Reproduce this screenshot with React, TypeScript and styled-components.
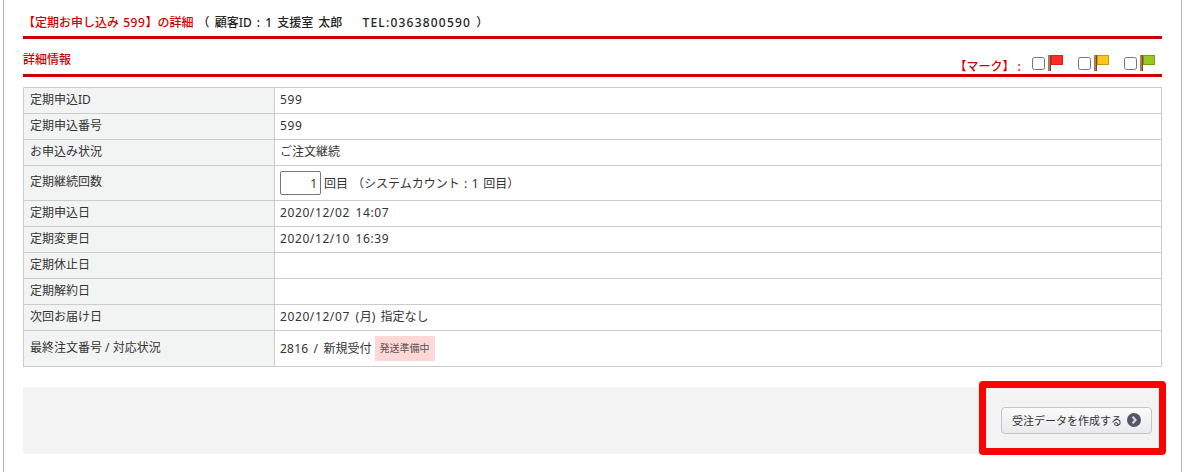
import styled, { createGlobalStyle } from "styled-components";

const GlobalStyle = createGlobalStyle`
  html, body {
    margin: 0;
    padding: 0;
    height: 472px;
    overflow: hidden;
    background: #fff;
    font-family: "Noto Sans", "Noto Sans CJK JP", sans-serif;
    font-size: 12px;
    color: #333;
  }
`;

const Page = styled.div`
  position: relative;
  box-sizing: border-box;
  width: 1179px;
  height: 472px;
  margin-left: 3px;
  border-left: 1px solid #b5b5b5;
  border-right: 1px solid #b5b5b5;
  padding: 0 19px;
`;

const PageTitle = styled.h2`
  margin: 0;
  box-sizing: border-box;
  height: 39px;
  padding-top: 14px;
  border-bottom: 3px solid #d00000;
  font-size: 12px;
  line-height: 17px;
  font-weight: 500;
  color: #d00000;
  white-space: pre;
  word-spacing: 1px;
`;

const Customer = styled.span`
  margin-left: 4px;
  color: #222;
  word-spacing: 2px;
`;

const Latin = styled.span<{ $s?: number }>`
  letter-spacing: ${(p) => p.$s ?? 0.6}px;
`;

const Tel = styled.span`
  margin-left: -2px;
  letter-spacing: 1.2px;
`;

const SectionHead = styled.div`
  display: flex;
  justify-content: space-between;
  align-items: flex-end;
  box-sizing: border-box;
  height: 38px;
  border-bottom: 3px solid #d00000;
`;

const SectionTitle = styled.h3`
  margin: 0 0 6px;
  font-size: 12px;
  line-height: 17px;
  font-weight: 500;
  color: #d00000;
`;

const Marks = styled.div`
  display: flex;
  align-items: center;
  height: 22px;
  margin-right: 7px;
`;

const MarkLabel = styled.span`
  font-weight: 500;
  font-size: 12px;
  color: #d00000;
  margin-right: 5px;
  margin-top: 6px;
  white-space: pre;
`;

const MarkItem = styled.label`
  display: flex;
  align-items: flex-start;
  margin-left: 15px;
  &:first-of-type {
    margin-left: 0;
  }
`;

const MarkBox = styled.span`
  display: block;
  box-sizing: border-box;
  width: 13px;
  height: 13px;
  margin: 2px 3px 0 0;
  background: #fff;
  border: 1px solid #767676;
  border-radius: 2.5px;
`;

const Table = styled.table`
  width: 1139px;
  margin-top: 10px;
  border-collapse: collapse;
  table-layout: fixed;
  font-size: 12px;
  line-height: 17px;
`;

const HeadCell = styled.th`
  width: 251px;
  box-sizing: border-box;
  padding: 0 6px 3px;
  border: 1px solid #ccc;
  background: #f2f4f4;
  text-align: left;
  font-weight: 400;
  color: #333;
`;

const Cell = styled.td`
  padding: 0 5px 3px;
  border: 1px solid #ccc;
  color: #333;
  word-spacing: 2px;
`;

const Row = styled.tr<{ $h?: number }>`
  height: ${(p) => p.$h ?? 26}px;
`;

const CountRow = styled.div`
  display: flex;
  align-items: center;
  height: 34px;
  margin-bottom: -3px;
  white-space: pre;
  word-spacing: 1px;
`;

const CountInput = styled.input`
  box-sizing: border-box;
  width: 41px;
  height: 24px;
  margin-right: 3px;
  padding: 0 3px;
  border: 1px solid #767676;
  border-radius: 2px;
  background: #fff;
  color: #333;
  font-family: inherit;
  font-size: 12px;
  text-align: right;
`;

const StatusRow = styled.div`
  display: flex;
  align-items: center;
  height: 35px;
  margin-bottom: -3px;
  white-space: pre;
`;

const StatusBadge = styled.span`
  box-sizing: border-box;
  width: 60px;
  margin-left: 3px;
  height: 25px;
  line-height: 25px;
  text-align: center;
  background: #ffd7d7;
  color: #555;
  font-size: 10px;
`;

const Footer = styled.div`
  display: flex;
  justify-content: flex-end;
  align-items: flex-start;
  box-sizing: border-box;
  width: 1139px;
  height: 67px;
  margin-top: 20px;
  padding: 20px 10px 0 0;
  background: #f3f3f3;
`;

const CreateButton = styled.button`
  display: flex;
  align-items: center;
  justify-content: center;
  gap: 5px;
  box-sizing: border-box;
  width: 151px;
  height: 27px;
  padding: 0 0 1px;
  border: 1px solid #c4c6ce;
  border-radius: 4px;
  background: linear-gradient(#fafafa, #e9eaec);
  color: #333;
  font-family: inherit;
  font-size: 11px;
`;

const Highlight = styled.div`
  position: absolute;
  left: 975px;
  top: 381px;
  box-sizing: border-box;
  width: 187px;
  height: 74px;
  border: 7px solid #ff0000;
  border-radius: 4px;
  pointer-events: none;
`;

function Flag({ color, edge }: { color: string; edge: string }) {
  return (
    <svg width="15" height="16" viewBox="0 0 15 16">
      <rect x="0" y="0" width="1.5" height="16" fill="#b07a50" />
      <rect x="1.5" y="0" width="1.5" height="16" fill="#7d4320" />
      <rect x="3.5" y="0.5" width="11" height="9" fill={color} stroke={edge} />
    </svg>
  );
}

function ArrowCircle() {
  return (
    <svg width="14" height="14" viewBox="0 0 14 14">
      <circle cx="7" cy="7" r="7" fill="#55556a" />
      <path d="M5.5 3.8 L8.6 7 L5.5 10.2" fill="none" stroke="#dedede" strokeWidth="2" />
    </svg>
  );
}

const rows: { label: string; value?: string; rest?: string }[] = [
  { label: "定期申込日", value: "2020/12/02 14:07" },
  { label: "定期変更日", value: "2020/12/10 16:39" },
  { label: "定期休止日" },
  { label: "定期解約日" },
  { label: "次回お届け日", value: "2020/12/07 (", rest: "月) 指定なし" },
];

export default function App() {
  return (
    <>
      <GlobalStyle />
      <Page>
        <PageTitle>
          【定期お申し込み <Latin>599</Latin>】の詳細
          <Customer>
            （ 顧客ID : 1 支援室 太郎　  <Tel>TEL:0363800590</Tel> ）
          </Customer>
        </PageTitle>
        <SectionHead>
          <SectionTitle>詳細情報</SectionTitle>
          <Marks>
            <MarkLabel>【マーク】 :  </MarkLabel>
            <MarkItem>
              <MarkBox />
              <Flag color="#ff2a2a" edge="#e01c1c" />
            </MarkItem>
            <MarkItem>
              <MarkBox />
              <Flag color="#ffc61a" edge="#c89a10" />
            </MarkItem>
            <MarkItem>
              <MarkBox />
              <Flag color="#9ac81a" edge="#7aa010" />
            </MarkItem>
          </Marks>
        </SectionHead>
        <Table>
          <tbody>
            <Row>
              <HeadCell>定期申込ID</HeadCell>
              <Cell>
                <Latin>599</Latin>
              </Cell>
            </Row>
            <Row>
              <HeadCell>定期申込番号</HeadCell>
              <Cell>
                <Latin>599</Latin>
              </Cell>
            </Row>
            <Row>
              <HeadCell>お申込み状況</HeadCell>
              <Cell>ご注文継続</Cell>
            </Row>
            <Row $h={35}>
              <HeadCell>定期継続回数</HeadCell>
              <Cell>
                <CountRow>
                  <CountInput defaultValue="1" />回目 （システムカウント<Latin $s={0.2}> : 1 </Latin>回目）
                </CountRow>
              </Cell>
            </Row>
            {rows.map((r) => (
              <Row key={r.label}>
                <HeadCell>{r.label}</HeadCell>
                <Cell>
                  <Latin>{r.value}</Latin>
                  {r.rest}
                </Cell>
              </Row>
            ))}
            <Row $h={36}>
              <HeadCell>最終注文番号 / 対応状況</HeadCell>
              <Cell>
                <StatusRow>
                  <Latin $s={0.2}>2816 / </Latin>新規受付
                  <StatusBadge>発送準備中</StatusBadge>
                </StatusRow>
              </Cell>
            </Row>
          </tbody>
        </Table>
        <Footer>
          <CreateButton>
            受注データを作成する
            <ArrowCircle />
          </CreateButton>
        </Footer>
        <Highlight />
      </Page>
    </>
  );
}
